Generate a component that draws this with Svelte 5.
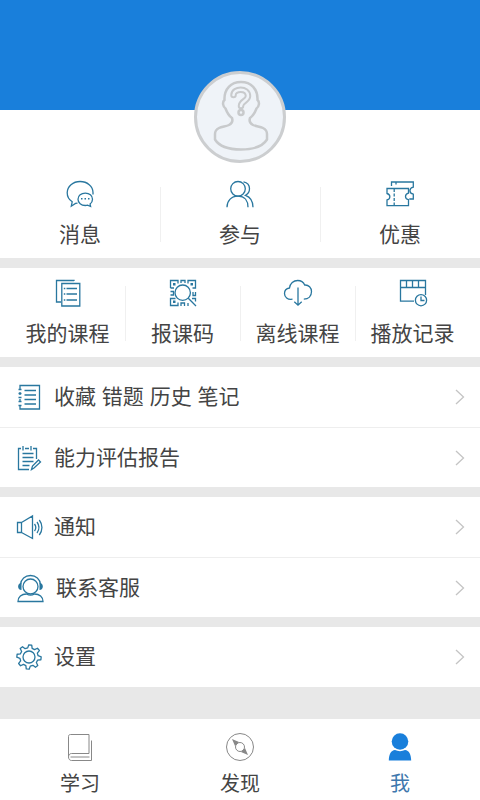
<script>
  const stats = [
    { icon: 'message', label: '消息' },
    { icon: 'people', label: '参与' },
    { icon: 'coupon', label: '优惠' }
  ];
  const tools = [
    { icon: 'courses', label: '我的课程' },
    { icon: 'code', label: '报课码' },
    { icon: 'cloud', label: '离线课程' },
    { icon: 'history', label: '播放记录' }
  ];
  const groups = [
    [
      { icon: 'notebook', label: '收藏 错题 历史 笔记' },
      { icon: 'report', label: '能力评估报告' }
    ],
    [
      { icon: 'speaker', label: '通知' },
      { icon: 'service', label: '联系客服', wide: true }
    ],
    [{ icon: 'gear', label: '设置' }]
  ];
  const tabs = [
    { icon: 'book', label: '学习' },
    { icon: 'compass', label: '发现' },
    { icon: 'me', label: '我', active: true }
  ];

  // Outline of an eight-toothed gear centred on (15, 15)
  const gearPoints = Array.from({ length: 8 }, (_, i) =>
    [[-14, 9.2], [-7, 12.2], [7, 12.2], [14, 9.2]].map(([offset, r]) => {
      const a = ((i * 45 + offset - 84) * Math.PI) / 180;
      return `${(15 + r * Math.cos(a)).toFixed(2)},${(15 + r * Math.sin(a)).toFixed(2)}`;
    }).join(' ')
  ).join(' ');
</script>

{#snippet glyph(name, wide = false)}
  <svg class="icon" class:wide viewBox={wide ? '0 0 32 30' : '0 0 30 30'} aria-hidden="true">
    {#if name === 'message'}
      <path d="M12.5 24.2 10.5 24.4 6.3 27.2 7.2 22.8C4 20.7 2.2 17.5 2.2 13.8 2.2 7.4 8 2.5 15.1 2.5S28 7.2 28 13.5v2" />
      <path d="M13 20.3c0-3.7 3.2-6.2 7.3-6.2s7.2 2.5 7.2 6.2c0 2-.9 3.6-2.4 4.8l.5 2.4-3-1.3c-.7.2-1.5.3-2.3.3-4.1 0-7.3-2.5-7.3-6.2Z" />
      <path class="fill" d="M16 19h1.500v1.500H16zM19.500 19H21v1.500h-1.500zM23 19h1.500v1.500H23z" />
    {:else if name === 'people'}
      <circle cx="13" cy="9.8" r="7.3" />
      <path d="M2 28.3C2 22 6 17.200 13 17.200S23 22 23 28.300M18.500 2.800C22.500 3.500 24.500 6.500 24.500 9.800c0 2.800-1.500 5.200-4 6.500 4.800 1.700 7.500 6.500 7.500 12" />
    {:else if name === 'coupon'}
      <path d="M6.500 7V3H28.300v5.200c-4.500 1-4.500 6 0 7V20h-4M11 3v2.500" />
      <path d="M2 9.500h21.500v4.700c-4 1-4 5.500 0 6.500v6H2V21c3.800-1 3.800-5.500 0-6.500Z" />
      <path d="M9.200 10v17" stroke-dasharray="3 1.5" />
    {:else if name === 'courses'}
      <path d="M21 3V2.500H3.500v21.500H8M8.800 5.500h18v22.500h-18z" />
      <path d="M13.500 10.500h10.500M13.500 16h10.500M13.500 22h10.500" />
      <path class="fill" d="M10.800 9.800h1.500v1.500h-1.500zM10.800 15.300h1.500v1.500h-1.500zM10.800 21.300h1.500v1.500h-1.500z" />
    {:else if name === 'code'}
      <path d="M2.500 10V2.500h7.500V5.500M20 5.500V2.500h7.500V10h-3M7.500 20.500h-5V27.500h7.500v-3M2.500 13.500h3v3.500h-3M13 5V2.500h4V5M25 14v3.500h2.500V14M13 28v-3h3.500v3M20 28v-3M24 20.500h3.500v3M2.500 10h3.500" />
      <path class="fill" d="M5 5h2.500v2.500H5zM22.500 5H25v2.500h-2.500zM5 22.500h2.500V25H5z" />
      <circle cx="14.700" cy="14.700" r="7.700" />
      <path d="m20.300 20.300 7.700 7.700" />
    {:else if name === 'cloud'}
      <path d="M9.500 21.200C4.500 22 1.500 19 1.500 15.500c0-3 2-5 5-5.500C7 5.500 10.500 2.500 14.700 2.500c3.300 0 5.800 1.700 7 4.500 4-.3 6.800 2.700 6.800 6.600 0 4.500-3 7.500-7.700 7.500M15 9.500V27M11.300 23.800 15 27.200l3.700-3.400" />
    {:else if name === 'history'}
      <path d="M16 23.200H2.500V2.500h25V17M2.500 9.500h25M8.500 3v6.500M14.500 3v6.500M20.500 3v6.500" />
      <circle cx="23" cy="22.200" r="5.600" />
      <path d="M23 18.500v4h3.500" />
    {:else if name === 'notebook'}
      <path d="M6 7V3.500h19.500v23.500H6V24M6 10v3M6 17v3M4.500 7.500h3M4.500 11.500h3M4.500 15.500h3M4.500 19.500h3M4.500 23.500h3M10.500 8.500h11.500M10.500 13h11.500M10.500 17.500h11.500M10.500 22h11.500" />
    {:else if name === 'report'}
      <path d="M7 5.500H4.500V26.500H15M11 5.500h4M19 5.500h3.500V16M9 3v4.500M17 3v4.500M8.500 10.500h11M8.500 14.500h11M8.500 18.500h11M8.500 22.500h7" />
      <path d="m17.500 26.500 1-3.500 6-6 2 2-6.500 6Z" />
    {:else if name === 'speaker'}
      <path d="M3.500 10.500h4v10h-4ZM7.500 10.500l11-6.500v22.500l-11-6M20.500 12c1.500 2 1.500 5 0 7M23 10c2.500 3.500 2.500 7.500 0 11M25.300 8c3.500 4.500 3.500 10.500 0 15" />
    {:else if name === 'service'}
      <circle cx="16.500" cy="13.500" r="7.500" />
      <path d="M6.500 11.500C7 6 11 2.500 16.500 2.500S26 6 26.500 11.500M4 28.500c0-4.500 3.500-7.500 8.500-7.500 2.500 1.500 5.500 1.500 8 0 5 0 8.500 3 8.500 7.500Z" />
      <path class="fill" d="M7.500 10v7C3 17 3 10 7.500 10ZM25.500 10v7C30 17 30 10 25.500 10Z" />
    {:else if name === 'gear'}
      <polygon points={gearPoints} stroke-linejoin="round" />
      <circle cx="15" cy="15" r="6" />
    {:else if name === 'book'}
      <path d="M3.500 24V4.500c0-1.300.8-2 2-2h18.500v19H6.500c-4 0-4 7 0 7h20V8.500M5.500 25h19" />
    {:else if name === 'compass'}
      <circle cx="15" cy="15" r="13.500" />
      <circle cx="15" cy="15" r="4.500" />
      <path class="fill" d="m7 7 7 3-4 4ZM23 23l-7-3 4-4Z" />
    {:else if name === 'me'}
      <circle class="fill" cx="15" cy="9.500" r="8.300" />
      <path class="fill" d="M3.800 28.500C4 22 6 18.500 10 18c3 1.500 7 1.500 10 0 4 .5 6 4 6.200 10.500Z" />
    {/if}
  </svg>
{/snippet}

<div class="page">
  <header></header>

  <section class="profile">
    <button class="avatar" aria-label="头像">
      <svg viewBox="1 1 86 86" aria-hidden="true">
        <path d="M36 45c1 3 0 5.500-3 7-3 1.500-7 1.500-10 3-3 1.500-4 3.500-4 6v5.500C23 73 33 76.500 45 76.500S67 73 71 66.500V61c0-2.500-1-4.500-4-6-3-1.500-7-1.500-10-3-3-1.500-4-4-3-7 3-2 5-5.500 6.500-9.500 2.500-1.500 3.500-6.500 1-8.500C62 16 55 9 45 9S28 16 28.500 27c-2.500 2-1.500 7 1 8.500C31 39.500 33 43 36 45Z" />
        <path class="mark" d="M37.500 22c0-7 14.500-7.500 14.500 1 0 5-7 5-7 10" />
        <path class="inner" d="M37.500 22c0-7 14.500-7.500 14.500 1 0 5-7 5-7 10" />
        <circle cx="45" cy="39.500" r="2.500" />
      </svg>
    </button>
    <nav class="stats">
      {#each stats as item}
        <a href="#{item.icon}">{@render glyph(item.icon)}<span>{item.label}</span></a>
      {/each}
    </nav>
  </section>

  <nav class="tools">
    {#each tools as item}
      <a href="#{item.icon}">{@render glyph(item.icon)}<span>{item.label}</span></a>
    {/each}
  </nav>

  {#each groups as group}
    <ul class="group">
      {#each group as row}
        <li>
          <a href="#{row.icon}">
            {@render glyph(row.icon, row.wide)}
            <span>{row.label}</span>
            <svg class="chevron" viewBox="0 0 10 16" aria-hidden="true"><path d="m1 1 7.500 7L1 15" /></svg>
          </a>
        </li>
      {/each}
    </ul>
  {/each}

  <nav class="tabs">
    {#each tabs as tab}
      <a href="#{tab.icon}" class:active={tab.active} aria-current={tab.active ? 'page' : undefined}>
        {@render glyph(tab.icon)}<span>{tab.label}</span>
      </a>
    {/each}
  </nav>
</div>

<style>
  :global(body) {
    margin: 0;
    background: #e8e8e8;
  }
  .page {
    display: flex;
    flex-direction: column;
    gap: 10px;
    min-height: 100vh;
    font-family: "Liberation Sans", "Noto Sans CJK SC", sans-serif;
    font-size: 21px;
    line-height: 30px;
    color: #444;
  }
  a {
    color: inherit;
    text-decoration: none;
  }
  svg {
    display: block;
    fill: none;
  }
  .icon {
    width: 30px;
    height: 30px;
    flex: none;
    stroke: #29779f;
    stroke-width: 1.3;
  }
  .icon.wide {
    width: 32px;
  }
  .icon .fill {
    fill: #29779f;
    stroke: none;
  }
  header {
    height: 110px;
    margin-bottom: -10px;
    background: #197fdb;
  }
  .profile {
    display: flex;
    flex-direction: column;
    align-items: center;
    background: #fff;
  }
  .avatar {
    box-sizing: border-box;
    width: 92px;
    height: 92px;
    margin-top: -39px;
    padding: 0;
    border: 3px solid #ccced0;
    border-radius: 50%;
    background: #eff3f8;
  }
  .avatar svg {
    width: 86px;
    height: 86px;
    stroke: #c8cacc;
    stroke-width: 2.5;
  }
  .avatar .mark {
    stroke-width: 6.5;
    stroke-linecap: round;
  }
  .avatar .inner {
    stroke: #eff3f8;
    stroke-width: 2.5;
    stroke-linecap: round;
  }
  .stats,
  .tools,
  .tabs {
    display: flex;
    background: #fff;
  }
  .stats {
    align-self: stretch;
    padding: 16px 0 8px;
  }
  .tools {
    padding: 10px 10px 8px;
  }
  .stats a,
  .tools a,
  .tabs a {
    flex: 1;
    display: flex;
    flex-direction: column;
    align-items: center;
    gap: 11px;
    white-space: nowrap;
  }
  .stats a,
  .tools a {
    position: relative;
  }
  .stats a + a::before,
  .tools a + a::before {
    content: "";
    position: absolute;
    left: 0;
    top: 8px;
    bottom: 8px;
    width: 1px;
    background: #f0f0f0;
  }
  .group {
    margin: 0;
    padding: 0;
    list-style: none;
    background: #fff;
  }
  .group li {
    box-sizing: border-box;
    display: grid;
    min-height: 60px;
  }
  .group li + li {
    border-top: 1px solid #eee;
  }
  .group a {
    display: flex;
    align-items: center;
    gap: 10px;
    padding: 0 15px 0 14px;
  }
  .group span {
    flex: 1;
  }
  .chevron {
    width: 10px;
    height: 16px;
    stroke: #c4c4c4;
    stroke-width: 1.3;
  }
  .tabs {
    margin-top: auto;
    padding: 13px 0 1px;
    font-size: 20px;
  }
  .tabs a {
    gap: 7px;
  }
  .tabs .icon {
    stroke: #888;
    stroke-width: 1;
  }
  .tabs .fill {
    fill: #888;
  }
  .tabs .active {
    color: #3e77ad;
  }
  .tabs .active .fill {
    fill: #197fdb;
  }
</style>
